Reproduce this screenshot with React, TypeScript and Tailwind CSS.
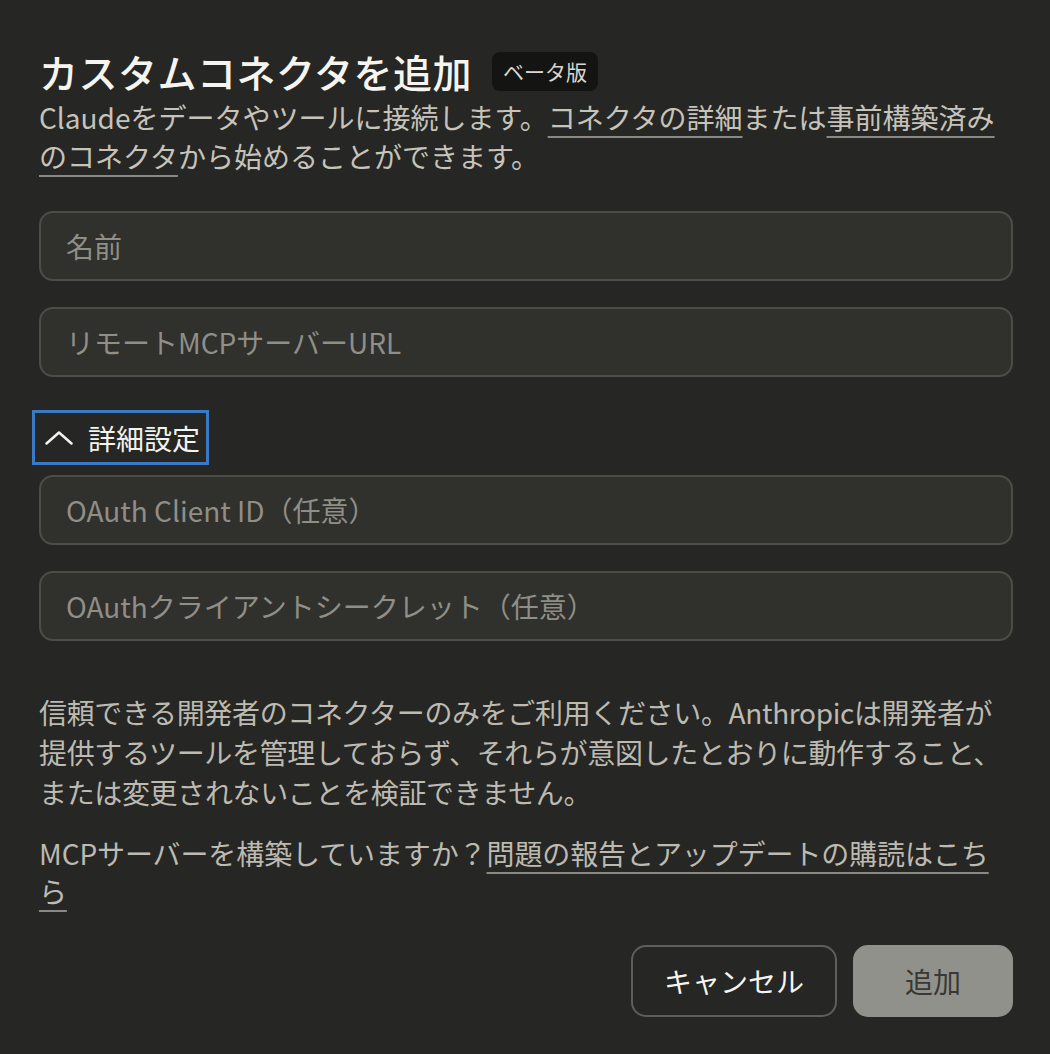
import { useState } from "react";

const FONT = "font-['Noto_Sans_CJK_JP','Noto_Sans',sans-serif]";

function Field({ placeholder }: { placeholder: string }) {
  return (
    <input
      placeholder={placeholder}
      className="h-[70px] w-full rounded-[14px] border-2 border-[#4d4c47] bg-[#30302d] px-[25px] text-[28px] text-[#e8e6dc] placeholder:text-[#8f8e87] focus:outline-none"
    />
  );
}

export default function App() {
  const [open, setOpen] = useState(true);

  return (
    <div className={`${FONT} h-[1054px] bg-[#262624] pl-[39px] pr-[37px] pt-[47px]`}>
      {/* Header */}
      <div className="flex items-center gap-[20px]">
        <h2 className="text-[39px] font-medium leading-[48px] tracking-[0.5px] text-[#f5f4ee]">カスタムコネクタを追加</h2>
        <span className="rounded-[8px] bg-[#141413] px-[11px] text-[21px] leading-[39px] text-[#d9d7cf]">ベータ版</span>
      </div>
      <p className="mt-[3px] text-[28px] leading-[39px] text-[#c5c3ba]">
        Claudeをデータやツールに接続します。
        <a className="underline decoration-[#8a8882] decoration-2 underline-offset-[7px]">コネクタの詳細</a>
        または
        <a className="underline decoration-[#8a8882] decoration-2 underline-offset-[7px]">事前構築済み<br />のコネクタ</a>
        から始めることができます。
      </p>

      {/* Fields */}
      <div className="mt-[35px] flex flex-col gap-[26px]">
        <Field placeholder="名前" />
        <Field placeholder="リモートMCPサーバーURL" />
      </div>

      <button
        onClick={() => setOpen(!open)}
        className="-ml-[7px] mt-[33px] flex h-[55px] items-center gap-[15px] border-[3px] border-[#3a7ac2] pl-[10px] pr-[6px] text-[28px] text-[#f3f2ec]"
      >
        <svg width="28" height="14" viewBox="0 0 28 14" fill="none" stroke="currentColor" strokeWidth="2.5" strokeLinecap="round" strokeLinejoin="round">
          <path d={open ? "M1.5 12.5 14 1.5l12.5 11" : "M1.5 1.5 14 12.5l12.5-11"} />
        </svg>
        詳細設定
      </button>

      {open && (
        <div className="mt-[10px] flex flex-col gap-[26px]">
          <Field placeholder="OAuth Client ID（任意）" />
          <Field placeholder="OAuthクライアントシークレット（任意）" />
        </div>
      )}

      {/* Notes */}
      <p className="mt-[51px] text-[28px] leading-[40px] tracking-[-0.35px] text-[#bcbab1]">
        信頼できる開発者のコネクターのみをご利用ください。Anthropicは開発者が<br />
        提供するツールを管理しておらず、それらが意図したとおりに動作すること、<br />
        または変更されないことを検証できません。
      </p>
      <p className="mt-[22px] text-[28px] leading-[38px] tracking-[-0.1px] text-[#bcbab1]">
        MCPサーバーを構築していますか？
        <a className="underline decoration-[#8a8882] decoration-2 underline-offset-[7px]">問題の報告とアップデートの購読はこち<br />ら</a>
      </p>

      {/* Actions */}
      <div className="mt-[35px] flex justify-end gap-[16px]">
        <button className="h-[72px] rounded-[15px] border-2 border-[#5f5e59] px-[31px] text-[28px] text-[#f5f4ee]">
          キャンセル
        </button>
        <button aria-disabled="true" className="h-[72px] w-[160px] cursor-default rounded-[15px] bg-[#91918b] text-[28px] text-[#383835]">
          追加
        </button>
      </div>
    </div>
  );
}
